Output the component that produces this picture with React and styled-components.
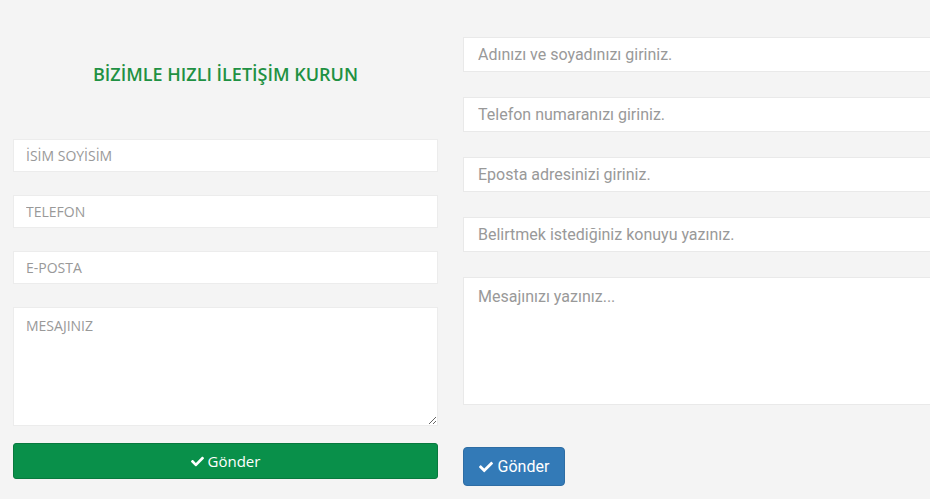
import React from "react";
import styled, { createGlobalStyle } from "styled-components";
import { FaCheck } from "react-icons/fa";

const Global = createGlobalStyle`
  html, body { margin: 0; padding: 0; background: #f4f4f4; overflow: hidden; }
  * { box-sizing: border-box; }
`;

const Viewport = styled.div`
  width: 100%;
  overflow: hidden;
`;

const Page = styled.div`
  display: flex;
  align-items: flex-start;
  gap: 25px;
  padding: 37px 0 0 13px;
  width: 1000px;
`;

const LeftCol = styled.form`
  width: 425px;
  flex: none;
  display: flex;
  flex-direction: column;
  padding-top: 25px;
  font-family: "Open Sans", sans-serif;
`;

const Heading = styled.h3`
  margin: 0 0 53px;
  text-align: center;
  font-size: 18px;
  line-height: 24px;
  font-weight: 600;
  color: #1f9143;
`;

const LeftStack = styled.div`
  display: flex;
  flex-direction: column;
  gap: 23px;
`;

const LeftInput = styled.input`
  display: block;
  width: 100%;
  height: 33px;
  border: 1px solid #ececec;
  background: #fff;
  padding: 0 12px;
  font-family: "Open Sans", sans-serif;
  font-size: 14px;
  color: #555;
  outline: none;
  &::placeholder { color: #999; }
`;

const LeftArea = styled.textarea`
  display: block;
  width: 100%;
  height: 119px;
  border: 1px solid #ececec;
  background: #fff;
  padding: 8px 12px;
  font-family: "Open Sans", sans-serif;
  font-size: 14px;
  resize: vertical;
  outline: none;
  &::placeholder { color: #999; }
`;

const GreenButton = styled.button`
  margin-top: 17px;
  height: 36px;
  width: 100%;
  border: 1px solid #08793e;
  border-radius: 3px;
  background: #09904a;
  color: #fff;
  font-family: "Open Sans", sans-serif;
  font-size: 15px;
  display: flex;
  align-items: center;
  justify-content: center;
  gap: 4px;
  cursor: pointer;
  svg { width: 13px; height: 13px; }
`;

const RightCol = styled.form`
  width: 500px;
  flex: none;
  display: flex;
  flex-direction: column;
  gap: 25px;
  font-family: Roboto, sans-serif;
`;

const RightInput = styled.input`
  display: block;
  width: 100%;
  height: 35px;
  border: 1px solid #e9e9e9;
  background: #fff;
  padding: 0 14px;
  font-family: Roboto, sans-serif;
  font-size: 16px;
  color: #555;
  outline: none;
  &::placeholder { color: #999; }
`;

const RightArea = styled.textarea`
  display: block;
  width: 100%;
  height: 128px;
  border: 1px solid #e9e9e9;
  background: #fff;
  padding: 9px 14px;
  font-family: Roboto, sans-serif;
  font-size: 16px;
  resize: none;
  outline: none;
  &::placeholder { color: #999; }
`;

const BlueButton = styled.button`
  margin-top: 17px;
  align-self: flex-start;
  width: 102px;
  height: 39px;
  border: 1px solid #2e6da4;
  border-radius: 4px;
  background: #337ab7;
  color: #fff;
  font-family: Roboto, sans-serif;
  font-size: 16px;
  display: flex;
  align-items: center;
  justify-content: center;
  gap: 5px;
  cursor: pointer;
  svg { width: 14px; height: 14px; }
`;

export default function App() {
  return (
    <>
      <Global />
      <Viewport>
        <Page>
          <LeftCol>
            <Heading>BİZİMLE HIZLI İLETİŞİM KURUN</Heading>
            <LeftStack>
              <LeftInput placeholder="İSİM SOYİSİM" />
              <LeftInput placeholder="TELEFON" />
              <LeftInput placeholder="E-POSTA" />
              <LeftArea placeholder="MESAJINIZ" />
            </LeftStack>
            <GreenButton type="button">
              <FaCheck /> Gönder
            </GreenButton>
          </LeftCol>
          <RightCol>
            <RightInput placeholder="Adınızı ve soyadınızı giriniz." />
            <RightInput placeholder="Telefon numaranızı giriniz." />
            <RightInput placeholder="Eposta adresinizi giriniz." />
            <RightInput placeholder="Belirtmek istediğiniz konuyu yazınız." />
            <RightArea placeholder="Mesajınızı yazınız..." />
            <BlueButton type="button">
              <FaCheck /> Gönder
            </BlueButton>
          </RightCol>
        </Page>
      </Viewport>
    </>
  );
}
